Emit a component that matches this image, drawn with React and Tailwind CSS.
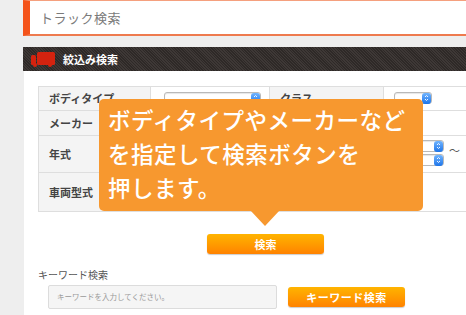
import React from "react";

const font = { fontFamily: '"Noto Sans CJK JP", "Noto Sans", sans-serif' };

function Knob() {
  return (
    <div className="w-[9px] h-[11px] rounded-[3px] bg-gradient-to-b from-[#6fb4ff] to-[#1a74e8] flex flex-col items-center justify-center gap-[1px]">
      <svg width="5" height="8" viewBox="0 0 5 8">
        <path d="M1 3 L2.5 1.5 L4 3 M1 5 L2.5 6.5 L4 5" stroke="white" strokeWidth="0.9" fill="none" />
      </svg>
    </div>
  );
}

function Select({ w }) {
  return (
    <div className={`${w} h-[12px] bg-white border border-[#b9b9b9] rounded-[3px] flex justify-end items-center shadow-[inset_0_1px_1px_rgba(0,0,0,0.1)]`}>
      <Knob />
    </div>
  );
}

function Truck() {
  return (
    <svg width="24" height="15" viewBox="0 0 24 15">
      <rect x="0" y="3" width="5" height="10" rx="1.5" fill="#d4230f" />
      <rect x="6" y="0" width="18" height="13" rx="1.5" fill="#d4230f" />
      <circle cx="4" cy="13" r="2" fill="#d4230f" />
      <circle cx="19" cy="13" r="2" fill="#d4230f" />
    </svg>
  );
}

export default function App() {
  const label = "bg-[#f4f4f4] border-[#dedede] text-[11px] font-bold text-[#444] pl-[10px] flex items-center";
  return (
    <div className="w-[466px] h-[315px] bg-[#eeeeee] overflow-hidden flex" style={font}>
      <div className="w-[23px] shrink-0" />
      <div className="flex-1 flex flex-col min-w-0">
        <div className="h-[36px] shrink-0 bg-white border-l-[7px] border-l-[#f4531a] border-t border-t-[#f5a07e] border-b-2 border-b-[#ee7a4e] flex items-center pl-[10px]">
          <span className="text-[13px] text-[#7a7a7a] tracking-[0.5px]">トラック検索</span>
        </div>
        <div className="h-[11px] shrink-0" />
        <div className="h-[24px] shrink-0 bg-[#3a3432] flex items-center pl-[8px] gap-[8px] bg-[repeating-linear-gradient(45deg,#3e3836_0px,#3e3836_1px,#2e2927_1px,#2e2927_2px)]">
          <Truck />
          <span className="text-[11px] font-bold text-white">絞込み検索</span>
        </div>
        <div className="flex-1 bg-white ml-[1px] relative pl-[14px] pt-[15px]">
          {/* table */}
          <div className="w-[460px] grid grid-cols-[112px_119px_114px_1fr] border-t border-l border-[#dedede] text-[#444]">
            <div className={`${label} h-[24px] border-r border-b`}>ボディタイプ</div>
            <div className="h-[24px] border-r border-b border-[#dedede] pl-[13px] pt-[5px]">
              <Select w="w-[97px]" />
            </div>
            <div className={`${label} h-[24px] border-r border-b`}>クラス</div>
            <div className="h-[24px] border-b border-[#dedede] pl-[10px] pt-[5px]">
              <Select w="w-[38px]" />
            </div>

            <div className={`${label} h-[25px] border-r border-b`}>メーカー</div>
            <div className="col-span-3 h-[25px] border-b border-[#dedede] pl-[13px] pt-[6px]">
              <Select w="w-[97px]" />
            </div>

            <div className={`${label} h-[37px] border-r border-b`}>年式</div>
            <div className="col-span-3 h-[37px] border-b border-[#dedede] pl-[196px] pt-[4px] flex gap-[5px]">
              <div className="flex flex-col gap-[2px]">
                <Select w="w-[97px]" />
                <Select w="w-[97px]" />
              </div>
              <span className="text-[11px] text-[#555] leading-[12px] mt-[4px]">〜</span>
            </div>

            <div className={`${label} h-[39px] border-r border-b`}>車両型式</div>
            <div className="col-span-3 h-[39px] border-b border-[#dedede]" />
          </div>

          <div className="ml-[169px] mt-[22px] w-[117px] h-[20px] rounded-[3px] bg-gradient-to-b from-[#ffb400] to-[#ff8200] shadow-[0_1px_1px_rgba(0,0,0,0.2)] flex items-center justify-center">
            <span className="text-[11px] font-bold text-white">検索</span>
          </div>

          <div className="mt-[15px] text-[10px] text-[#555] leading-[12px]">キーワード検索</div>
          <div className="mt-[4px] ml-[10px] flex items-center gap-[11px]">
            <div className="w-[229px] h-[24px] bg-[#f5f5f5] border border-[#dcdcdc] rounded-[2px] flex items-center pl-[8px]">
              <span className="text-[7.5px] text-[#999]">キーワードを入力してください。</span>
            </div>
            <div className="w-[117px] h-[20px] rounded-[3px] bg-gradient-to-b from-[#ffb400] to-[#ff8200] shadow-[0_1px_1px_rgba(0,0,0,0.2)] flex items-center justify-center">
              <span className="text-[11px] font-bold text-white tracking-[0.5px]">キーワード検索</span>
            </div>
          </div>

          {/* tooltip */}
          <div className="absolute left-[75px] top-[28px] w-[324px] h-[112px] bg-[#f7982f] rounded-[5px] pl-[9px] pt-[3px]">
            <div className="text-white text-[22.5px] font-medium leading-[34px] tracking-[0.5px]">
              <div>ボディタイプやメーカーなど</div>
              <div>を指定して検索ボタンを</div>
              <div>押します。</div>
            </div>
            <div className="absolute left-[151px] top-[111px] w-0 h-0 border-l-[15px] border-r-[15px] border-t-[16px] border-l-transparent border-r-transparent border-t-[#f7982f]" />
          </div>
        </div>
      </div>
    </div>
  );
}
